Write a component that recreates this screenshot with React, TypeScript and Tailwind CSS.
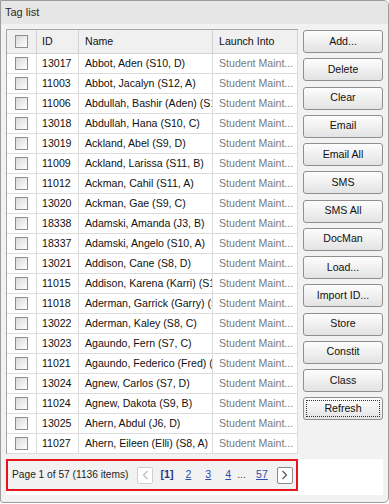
import React from "react";

const rows = [
  ["13017", "Abbot, Aden (S10, D)"],
  ["11003", "Abbot, Jacalyn (S12, A)"],
  ["11006", "Abdullah, Bashir (Aden) (S11, B)"],
  ["13018", "Abdullah, Hana (S10, C)"],
  ["13019", "Ackland, Abel (S9, D)"],
  ["11009", "Ackland, Larissa (S11, B)"],
  ["11012", "Ackman, Cahil (S11, A)"],
  ["13020", "Ackman, Gae (S9, C)"],
  ["18338", "Adamski, Amanda (J3, B)"],
  ["18337", "Adamski, Angelo (S10, A)"],
  ["13021", "Addison, Cane (S8, D)"],
  ["11015", "Addison, Karena (Karri) (S10, A)"],
  ["11018", "Aderman, Garrick (Garry) (S9, B)"],
  ["13022", "Aderman, Kaley (S8, C)"],
  ["13023", "Agaundo, Fern (S7, C)"],
  ["11021", "Agaundo, Federico (Fred) (S12, D)"],
  ["13024", "Agnew, Carlos (S7, D)"],
  ["11024", "Agnew, Dakota (S9, B)"],
  ["13025", "Ahern, Abdul (J6, D)"],
  ["11027", "Ahern, Eileen (Elli) (S8, A)"],
];

const buttons = [
  "Add...",
  "Delete",
  "Clear",
  "Email",
  "Email All",
  "SMS",
  "SMS All",
  "DocMan",
  "Load...",
  "Import ID...",
  "Store",
  "Constit",
  "Class",
];

function Check() {
  return (
    <div className="w-[13px] h-[13px] border border-[#8e8e8e] bg-gradient-to-br from-[#d9d9d9] to-white" />
  );
}

function Chevron({ dir, color }: { dir: "l" | "r"; color: string }) {
  return (
    <svg width="7" height="10" viewBox="0 0 7 10">
      <path
        d={dir === "l" ? "M5.5 1 L1.5 5 L5.5 9" : "M1.5 1 L5.5 5 L1.5 9"}
        fill="none"
        stroke={color}
        strokeWidth="1.2"
      />
    </svg>
  );
}

export default function App() {
  return (
    <div className="w-[389px] h-[503px] bg-[#f2f2f2] border border-[#9c9c9c] rounded-r-[5px] rounded-bl-[3px] overflow-hidden font-['Liberation_Sans',Arial,sans-serif] text-[10.6px] text-[#111]">
      {/* Title bar */}
      <div className="h-[23px] bg-[#e6e6e6] flex items-center pl-[4px] text-[11px] text-[#2a2a2a]">
        Tag list
      </div>

      <div className="pl-[5px] pt-[5px]">
        <div className="flex">
          {/* Grid */}
          <div className="w-[292px] bg-white border-l border-t border-[#a6a6a6]">
            <div className="grid grid-cols-[30px_42px_134px_85px] h-[24px] bg-[#f0f0f0]">
              <div className="flex items-center justify-center border-r border-b border-[#d2d2d2]">
                <Check />
              </div>
              <div className="flex items-center pl-[5px] border-r border-b border-[#d2d2d2]">ID</div>
              <div className="flex items-center pl-[6px] border-r border-b border-[#d2d2d2]">Name</div>
              <div className="flex items-center pl-[6px] border-r border-b border-[#d2d2d2]">Launch Into</div>
            </div>
            {rows.map(([id, name]) => (
              <div key={id} className="grid grid-cols-[30px_42px_134px_85px] h-[20px]">
                <div className="flex items-center justify-center border-r border-b border-[#dcdcdc]">
                  <Check />
                </div>
                <div className="flex items-center pl-[5px] border-r border-b border-[#dcdcdc]">{id}</div>
                <div className="flex items-center pl-[6px] border-r border-b border-[#dcdcdc] overflow-hidden whitespace-nowrap">
                  {name}
                </div>
                <div className="flex items-center pl-[6px] border-r border-b border-[#dcdcdc] overflow-hidden whitespace-nowrap text-[#7a7a7a]">
                  Student Maint...
                </div>
              </div>
            ))}
          </div>

          {/* Buttons */}
          <div className="ml-[5px] w-[80px] flex flex-col gap-[5.25px] pt-[1px]">
            {buttons.map((b) => (
              <div
                key={b}
                className="h-[23px] flex items-center justify-center border border-[#8f8f8f] rounded-[3px] bg-gradient-to-b from-[#fdfdfd] to-[#e3e3e3]"
              >
                {b}
              </div>
            ))}
            <div className="h-[23px] p-[2px] border border-[#8f8f8f] rounded-[3px] bg-gradient-to-b from-[#fdfdfd] to-[#e3e3e3]">
              <div className="h-full flex items-center justify-center border border-dotted border-[#333]">
                Refresh
              </div>
            </div>
          </div>
        </div>

        {/* Pager strip */}
        <div className="mt-[5px] w-[377px] h-[36px] bg-white">
          <div className="w-[292px] h-[32px] border-2 border-[#e8141b] bg-[#f2f2f2] flex items-center pl-[4px] text-[10.2px] text-[#222]">
            <span>Page 1 of 57 (1136 items)</span>
            <div className="ml-[9px] w-[16px] h-[17px] border border-[#cfcfcf] rounded-[2px] bg-white flex items-center justify-center">
              <Chevron dir="l" color="#bdbdbd" />
            </div>
            <span className="ml-[7px] font-bold text-[#1d3a8a] text-[10.6px]">[1]</span>
            <span className="ml-[12px] underline text-[#2a4fb0] text-[10.6px]">2</span>
            <span className="ml-[14px] underline text-[#2a4fb0] text-[10.6px]">3</span>
            <span className="ml-[14px] underline text-[#2a4fb0] text-[10.6px]">4</span>
            <span className="ml-[6px] text-[#444] text-[10.6px]">...</span>
            <span className="ml-[10px] underline text-[#2a4fb0] text-[10.6px]">57</span>
            <div className="ml-[9px] w-[16px] h-[17px] border border-[#8a8a8a] rounded-[2px] bg-white flex items-center justify-center">
              <Chevron dir="r" color="#555" />
            </div>
          </div>
        </div>
      </div>
    </div>
  );
}
